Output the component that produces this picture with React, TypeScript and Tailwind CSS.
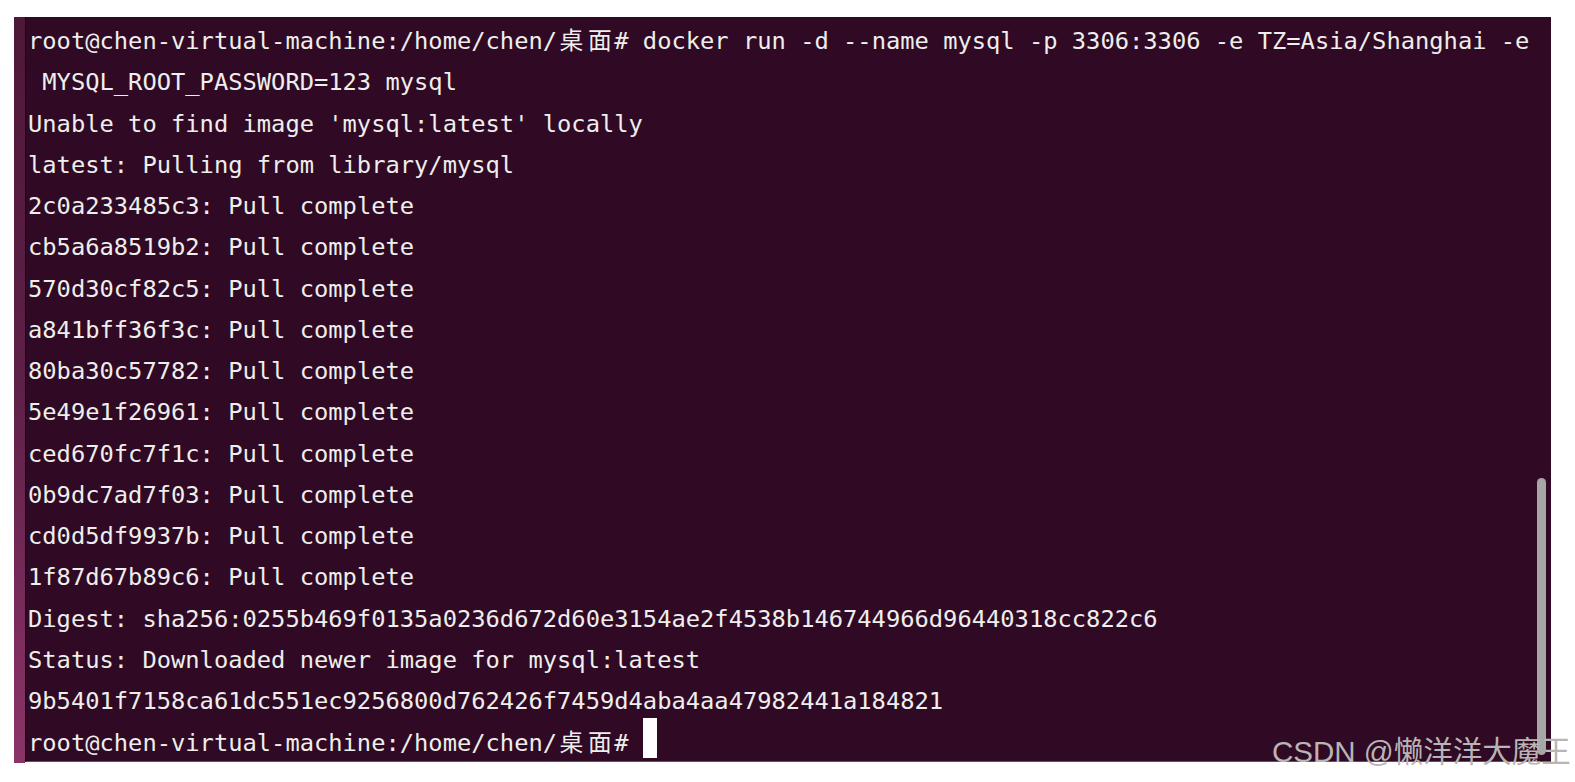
import React from "react";

const mono = '"DejaVu Sans Mono", "Liberation Mono", monospace';

function Cjk({ c }: { c: string }) {
  return (
    <span
      className="inline-block w-[28.6px] text-center leading-[20px]"
      style={{ fontFamily: '"Noto Sans CJK SC", sans-serif' }}
    >
      {c}
    </span>
  );
}

function Prompt() {
  return (
    <>
      root@chen-virtual-machine:/home/chen/
      <Cjk c="桌" />
      <Cjk c="面" />#
    </>
  );
}

const pulls = [
  "2c0a233485c3",
  "cb5a6a8519b2",
  "570d30cf82c5",
  "a841bff36f3c",
  "80ba30c57782",
  "5e49e1f26961",
  "ced670fc7f1c",
  "0b9dc7ad7f03",
  "cd0d5df9937b",
  "1f87d67b89c6",
];

function Line({ children }: { children?: React.ReactNode }) {
  return <div className="h-[41.28px] leading-[41.28px] whitespace-pre">{children}</div>;
}

export default function App() {
  return (
    <div className="relative w-[1575px] h-[782px] bg-white overflow-hidden pl-[14px] pt-[17px]">
      <div className="relative flex w-[1537px] h-[746px]">
        <div className="w-[11px] h-[746px] bg-gradient-to-b from-[#4e1838] via-[#5e2048] to-[#8a3468]" />
        <div className="w-[1px] h-[745px] bg-[#1e0616]" />
        <div
          className="relative flex-1 h-[745px] bg-[#300a24] border-b border-[#a3382c] pl-[2px] pt-[4px] text-[#eeeeec] text-[23.75px] overflow-hidden"
          style={{ fontFamily: mono }}
        >
          <Line>
            <Prompt /> docker run -d --name mysql -p 3306:3306 -e TZ=Asia/Shanghai -e
          </Line>
          <Line> MYSQL_ROOT_PASSWORD=123 mysql</Line>
          <Line>Unable to find image 'mysql:latest' locally</Line>
          <Line>latest: Pulling from library/mysql</Line>
          {pulls.map((p) => (
            <Line key={p}>{p}: Pull complete</Line>
          ))}
          <Line>Digest: sha256:0255b469f0135a0236d672d60e3154ae2f4538b146744966d96440318cc822c6</Line>
          <Line>Status: Downloaded newer image for mysql:latest</Line>
          <Line>9b5401f7158ca61dc551ec9256800d762426f7459d4aba4aa47982441a184821</Line>
          <Line>
            <Prompt />{" "}
            <span className="relative inline-block w-[14.3px] h-[10px]">
              <span className="absolute left-0 top-[-23px] w-[14px] h-[40px] bg-white" />
            </span>
          </Line>
          <div className="absolute left-[1511px] top-[461px] w-[9px] h-[277px] rounded-full bg-[#a6a6a6]" />
        </div>
      </div>
      <div
        className="absolute left-[1272px] top-[732px] text-[29.5px] leading-[40px] text-[#b9b4b6] whitespace-nowrap"
        style={{ fontFamily: '"Liberation Sans", "Noto Sans CJK SC", sans-serif' }}
      >
        CSDN @懒洋洋大魔王
      </div>
    </div>
  );
}
